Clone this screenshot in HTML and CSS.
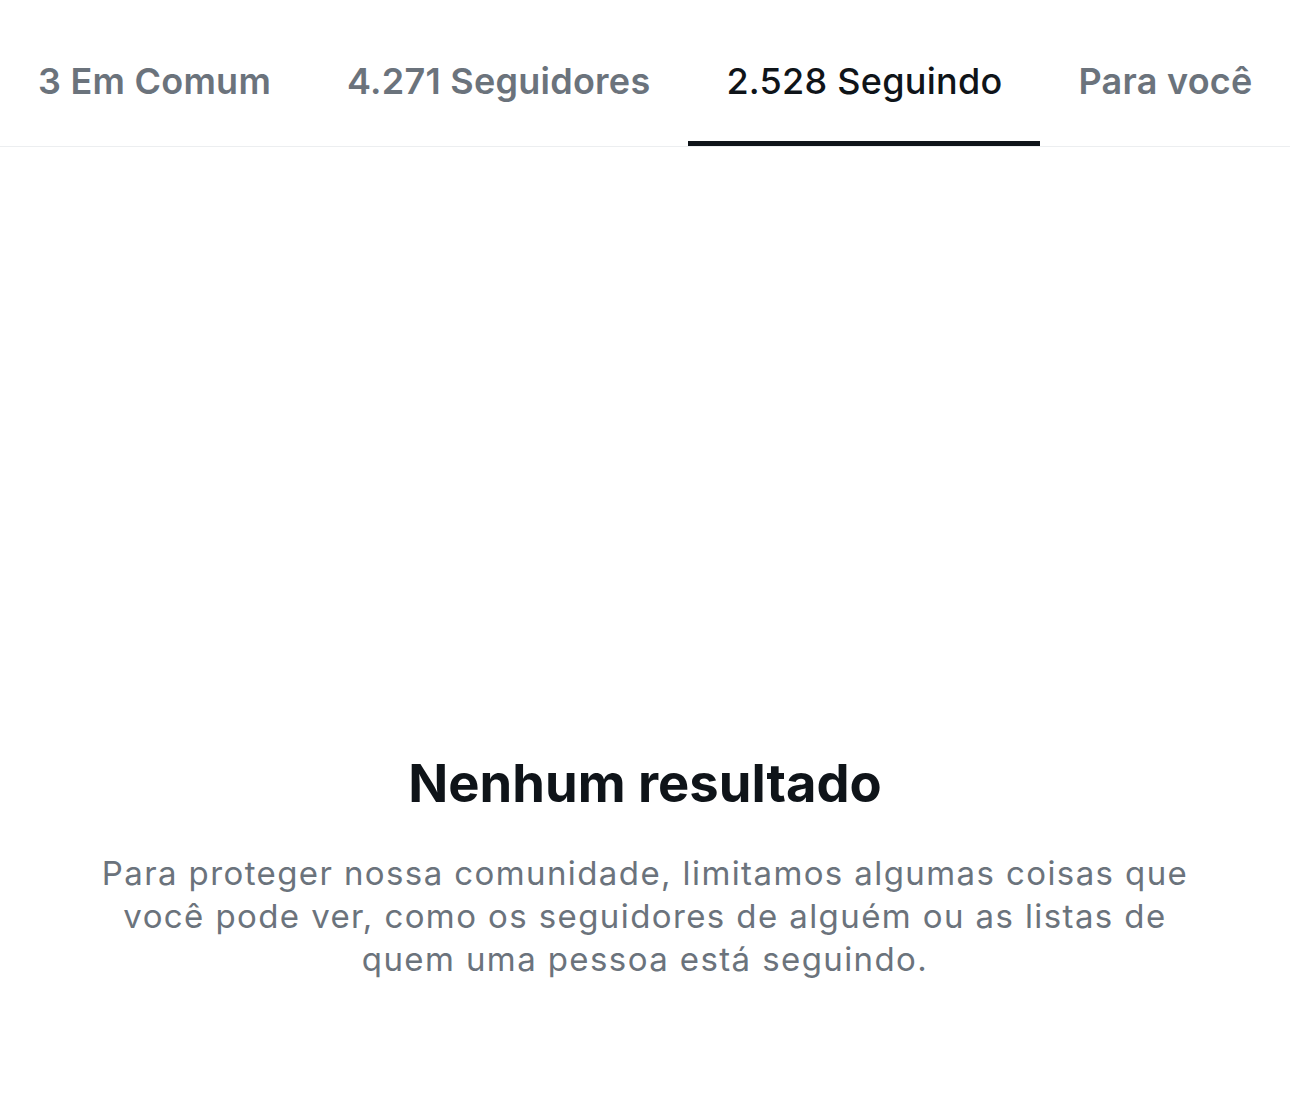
FILE: index.html
```html
<!DOCTYPE html>
<html lang="pt-BR">
<head>
    <meta charset="UTF-8">
    <meta name="viewport" content="width=device-width, initial-scale=1.0">
    <title>Seguindo</title>
    <link rel="stylesheet" href="styles.css">
</head>
<body>
    <nav class="tabs">
        <a class="tab" href="#">3 Em Comum</a>
        <a class="tab" href="#">4.271 Seguidores</a>
        <a class="tab active" href="#">2.528 Seguindo</a>
        <a class="tab" href="#">Para você</a>
    </nav>
    <div class="empty">
        <h1>Nenhum resultado</h1>
        <p>Para proteger nossa comunidade, limitamos algumas coisas que você pode ver, como os seguidores de alguém ou as listas de quem uma pessoa está seguindo.</p>
    </div>
</body>
</html>
```

FILE: styles.css
```css
body {
    margin: 0;
    font-family: Inter, "Noto Sans", sans-serif;
    background: #fff;
    color: #0f1419;
}
.tabs {
    display: flex;
    height: 146px;
    border-bottom: 1px solid #eceef0;
    overflow: hidden;
}
.tab {
    flex: none;
    box-sizing: border-box;
    height: 146px;
    padding: 59px 38px 0;
    border-bottom: 5px solid transparent;
    font-size: 36px;
    line-height: 44px;
    letter-spacing: 0.25px;
    font-weight: 600;
    color: #6b737c;
    text-decoration: none;
    white-space: nowrap;
}
.tab.active {
    color: #0f1419;
    font-weight: 500;
    border-bottom-color: #0f1419;
}
.empty {
    padding: 604px 60px 0;
    text-align: center;
}
.empty h1 {
    margin: 0;
    font-size: 52.5px;
    line-height: 64px;
    font-weight: 700;
    color: #0f1419;
}
.empty p {
    margin: 37px auto 0;
    max-width: 1100px;
    font-size: 33px;
    line-height: 43px;
    letter-spacing: 1.4px;
    color: #6b737c;
}
```
